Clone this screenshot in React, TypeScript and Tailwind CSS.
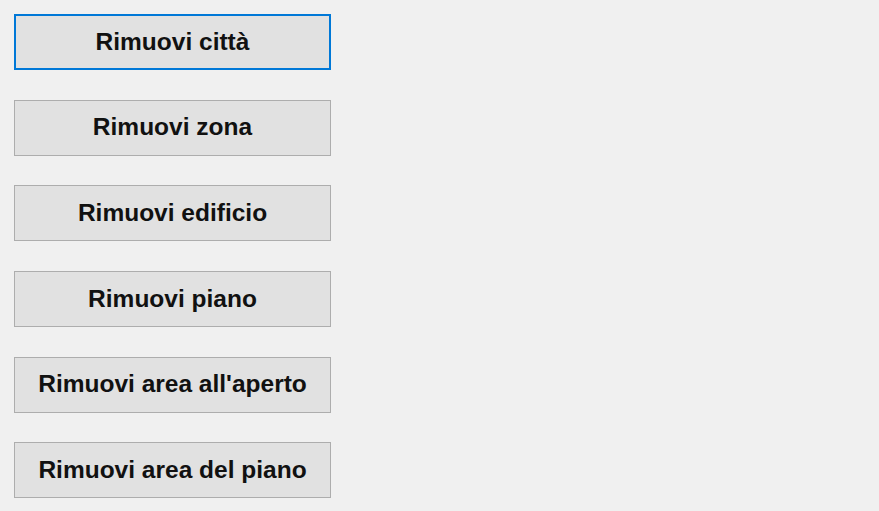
export default function App() {
  const labels = [
    "Rimuovi città",
    "Rimuovi zona",
    "Rimuovi edificio",
    "Rimuovi piano",
    "Rimuovi area all'aperto",
    "Rimuovi area del piano",
  ];

  return (
    <div className="w-[879px] h-[511px] bg-[#f0f0f0] pl-[14px] pt-[14px] font-['Liberation_Sans',Arial,sans-serif]">
      <div className="flex flex-col gap-[29.7px]">
        {labels.map((label, i) => (
          <button
            key={label}
            className={
              i === 0
                ? "w-[317px] h-[56px] bg-[#e1e1e1] border-2 border-[#0078d7] text-[#111] text-[24.5px] font-bold"
                : "w-[317px] h-[56px] bg-[#e1e1e1] border border-[#adadad] text-[#111] text-[24.5px] font-bold"
            }
          >
            {label}
          </button>
        ))}
      </div>
    </div>
  );
}
